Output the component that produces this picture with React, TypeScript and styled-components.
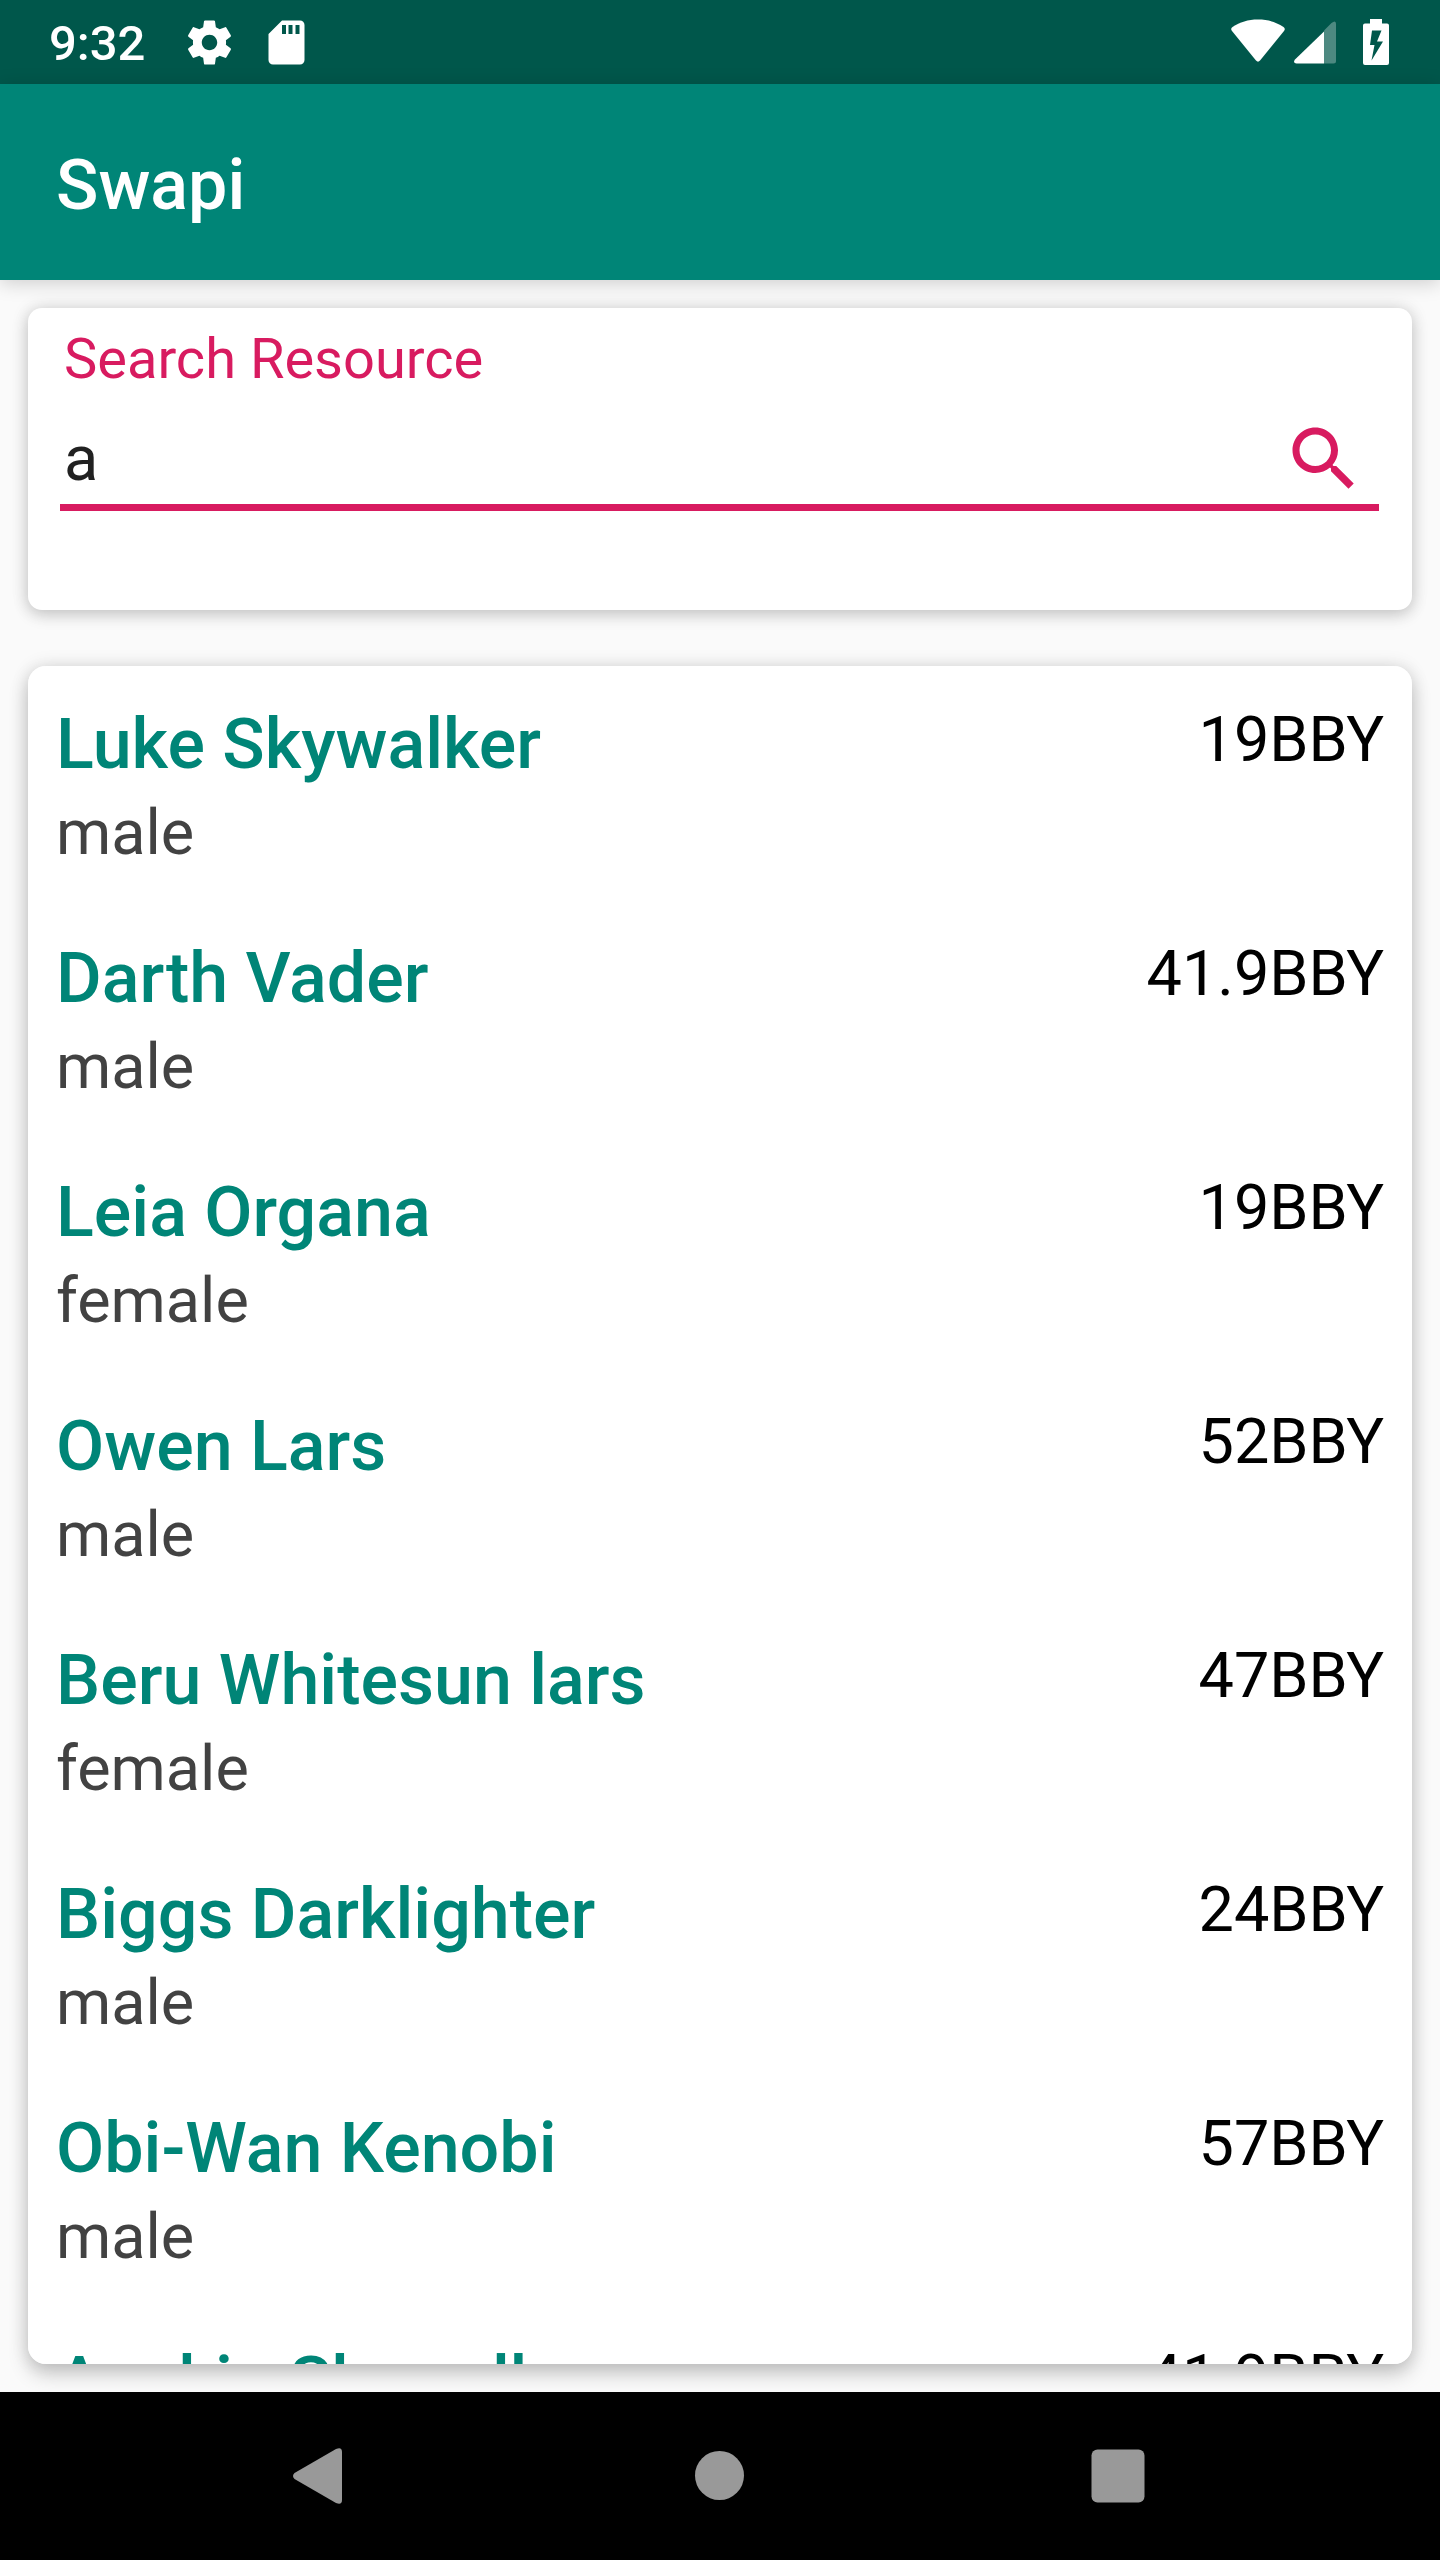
import React, { useState } from "react";
import styled, { createGlobalStyle } from "styled-components";

const color = {
  primary: "#008577",
  primaryDark: "#00574b",
  accent: "#d81b60",
  background: "#fafafa",
  key: "#999999",
};

const GlobalStyle = createGlobalStyle`
  * { box-sizing: border-box; }
  body {
    margin: 0;
    background: ${color.background};
    font-family: Roboto, "Liberation Sans", sans-serif;
  }
`;

const Screen = styled.div`
  display: flex;
  flex-direction: column;
  height: 100vh;
`;

const StatusBar = styled.div`
  display: flex;
  align-items: center;
  justify-content: space-between;
  height: 84px;
  padding: 0 51px 0 49px;
  background: ${color.primaryDark};
  color: #fff;
`;

const StatusGroup = styled.div<{ $gap: number }>`
  display: flex;
  align-items: center;
  gap: ${(p) => p.$gap}px;
`;

const Clock = styled.time`
  width: 110px;
  padding-top: 4px;
  font-size: 49px;
  line-height: 58px;
  font-weight: 500;
`;

const Glyph = styled.svg`
  display: block;
  flex: none;
  fill: currentColor;
`;

const BatteryGlyph = styled(Glyph)`
  margin-left: 18px;
`;

const AppBar = styled.header`
  display: flex;
  align-items: center;
  height: 196px;
  padding: 6px 56px 0;
  background: ${color.primary};
  box-shadow: 0 3px 18px rgba(0, 0, 0, 0.18);
`;

const Title = styled.h1`
  margin: 0;
  color: #fff;
  font-size: 70px;
  line-height: 82px;
  font-weight: 500;
`;

const Content = styled.main`
  display: flex;
  flex: 1;
  flex-direction: column;
  gap: 56px;
  min-height: 0;
  padding: 28px;
`;

const SearchCard = styled.form`
  flex: none;
  padding: 18px 33px 99px 32px;
  border-radius: 14px;
  background: #fff;
  box-shadow: 0 5px 16px rgba(0, 0, 0, 0.16), 0 0 18px rgba(0, 0, 0, 0.12);
`;

const SearchLabel = styled.label`
  display: block;
  padding: 0 4px;
  color: ${color.accent};
  font-size: 56px;
  line-height: 66px;
`;

const SearchField = styled.div`
  display: flex;
  align-items: center;
  height: 99px;
  margin-top: 20px;
  padding: 1px 13px 0 4px;
  border-bottom: 7px solid ${color.accent};
`;

const SearchInput = styled.input`
  flex: 1;
  min-width: 0;
  height: 74px;
  padding: 0;
  border: 0;
  outline: 0;
  background: transparent;
  color: #212121;
  font: 400 63px/74px Roboto, "Liberation Sans", sans-serif;
`;

const IconButton = styled.button`
  display: flex;
  padding: 0;
  border: 0;
  background: transparent;
  color: ${color.accent};
  cursor: pointer;
`;

const PeopleCard = styled.ul`
  flex: 1;
  min-height: 0;
  margin: 0;
  padding: 0;
  overflow-y: auto;
  scrollbar-width: none;
  border-radius: 18px;
  background: #fff;
  list-style: none;
  box-shadow: 0 10px 20px rgba(0, 0, 0, 0.2), 0 0 18px rgba(0, 0, 0, 0.12);
`;

const PersonRow = styled.li`
  display: flex;
  justify-content: space-between;
  padding: 37px 28px 30px;
`;

const PersonText = styled.div`
  display: flex;
  flex-direction: column;
  gap: 11px;
`;

const PersonName = styled.span`
  color: ${color.primary};
  font-size: 70px;
  line-height: 82px;
  font-weight: 500;
`;

const Detail = styled.span<{ $color: string }>`
  color: ${(p) => p.$color};
  font-size: 63px;
  line-height: 74px;
`;

const NavBar = styled.nav`
  display: flex;
  align-items: center;
  height: 168px;
  padding: 0 123px;
  background: #000;
`;

const NavButton = styled(IconButton)`
  flex: 1;
  justify-content: center;
  color: ${color.key};
`;

const people = [
  { name: "Luke Skywalker", gender: "male", birth: "19BBY" },
  { name: "Darth Vader", gender: "male", birth: "41.9BBY" },
  { name: "Leia Organa", gender: "female", birth: "19BBY" },
  { name: "Owen Lars", gender: "male", birth: "52BBY" },
  { name: "Beru Whitesun lars", gender: "female", birth: "47BBY" },
  { name: "Biggs Darklighter", gender: "male", birth: "24BBY" },
  { name: "Obi-Wan Kenobi", gender: "male", birth: "57BBY" },
  { name: "Anakin Skywalker", gender: "male", birth: "41.9BBY" },
];

const SettingsIcon = () => (
  <Glyph width="53" height="53" viewBox="0 0 24 24">
    <path d="M19.43 12.98c.04-.32.07-.64.07-.98s-.03-.66-.07-.98l2.11-1.65c.19-.15.24-.42.12-.64l-2-3.46c-.12-.22-.39-.3-.61-.22l-2.49 1c-.52-.4-1.08-.73-1.69-.98l-.38-2.65C14.46 2.18 14.25 2 14 2h-4c-.25 0-.46.18-.49.42l-.38 2.65c-.61.25-1.17.59-1.69.98l-2.49-1c-.23-.09-.49 0-.61.22l-2 3.46c-.13.22-.07.49.12.64l2.11 1.65c-.04.32-.07.65-.07.98s.03.66.07.98l-2.11 1.65c-.19.15-.24.42-.12.64l2 3.46c.12.22.39.3.61.22l2.49-1c.52.4 1.08.73 1.69.98l.38 2.65c.03.24.24.42.49.42h4c.25 0 .46-.18.49-.42l.38-2.65c.61-.25 1.17-.59 1.69-.98l2.49 1c.23.09.49 0 .61-.22l2-3.46c.12-.22.07-.49-.12-.64l-2.11-1.65zM12 15.5c-1.93 0-3.5-1.57-3.5-3.5s1.57-3.5 3.5-3.5 3.5 1.57 3.5 3.5-1.57 3.5-3.5 3.5z" />
  </Glyph>
);

const SdCardIcon = () => (
  <Glyph width="53" height="53" viewBox="0 0 53 53">
    <path
      fillRule="evenodd"
      d="M22 4.500H40a4.500 4.500 0 0 1 4.500 4.500V44a4.500 4.500 0 0 1-4.500 4.500H13A4.500 4.500 0 0 1 8.500 44V18zM22 9v9h4V9zM28.500 9v9h4V9zM35.500 9v9h4V9z"
    />
  </Glyph>
);

const WifiIcon = () => (
  <Glyph width="54" height="46" viewBox="0 0 54 46">
    <path d="M1 12Q-.8 9.600 1.500 8C9 3 17 .5 27 .5S45 3 52.500 8Q54.800 9.600 53 12L29 41.500q-2 2.300-4 0z" />
  </Glyph>
);

const SignalIcon = () => (
  <Glyph width="42" height="46" viewBox="0 0 42 46">
    <path opacity=".3" d="M30 11.500 37.500 4Q42 .5 42 5V42q0 2.500-2.500 2.500H30z" />
    <path d="M30 12.500V44.500H2.500Q-1.500 44 1 40.500z" />
  </Glyph>
);

const BatteryIcon = () => (
  <BatteryGlyph width="26" height="46" viewBox="0 0 26 46">
    <path
      fillRule="evenodd"
      d="M7 0H19V4.500H24Q26 4.500 26 6.500V44q0 2-2 2H2q-2 0-2-2V6.500Q0 4.500 2 4.500H7zM9 11.500 7 26h4.500L8.500 41.500 20 22.500H14L18.500 11.500z"
    />
  </BatteryGlyph>
);

const SearchIcon = () => (
  <Glyph width="84" height="84" viewBox="0 0 24 24">
    <path d="M15.5 14h-.79l-.28-.27C15.410 12.590 16 11.110 16 9.500 16 5.910 13.090 3 9.500 3S3 5.910 3 9.500 5.910 16 9.500 16c1.610 0 3.090-.59 4.230-1.570l.27.28v.79l5 4.990L20.490 19l-4.990-5zm-6 0C7.010 14 5 11.990 5 9.500S7.010 5 9.500 5 14 7.010 14 9.500 11.990 14 9.500 14z" />
  </Glyph>
);

export default function App() {
  const [query, setQuery] = useState("a");

  return (
    <Screen>
      <GlobalStyle />
      <StatusBar>
        <StatusGroup $gap={24}>
          <Clock>9:32</Clock>
          <SettingsIcon />
          <SdCardIcon />
        </StatusGroup>
        <StatusGroup $gap={9}>
          <WifiIcon />
          <SignalIcon />
          <BatteryIcon />
        </StatusGroup>
      </StatusBar>
      <AppBar>
        <Title>Swapi</Title>
      </AppBar>
      <Content>
        <SearchCard onSubmit={(e) => e.preventDefault()}>
          <SearchLabel htmlFor="resource">Search Resource</SearchLabel>
          <SearchField>
            <SearchInput
              id="resource"
              type="text"
              value={query}
              onChange={(e) => setQuery(e.target.value)}
            />
            <IconButton type="submit" aria-label="Search">
              <SearchIcon />
            </IconButton>
          </SearchField>
        </SearchCard>
        <PeopleCard>
          {people.map((person) => (
            <PersonRow key={person.name}>
              <PersonText>
                <PersonName>{person.name}</PersonName>
                <Detail $color="#424242">{person.gender}</Detail>
              </PersonText>
              <Detail $color="#000">{person.birth}</Detail>
            </PersonRow>
          ))}
        </PeopleCard>
      </Content>
      <NavBar>
        <NavButton type="button" aria-label="Back">
          <Glyph width="84" height="84" viewBox="0 0 84 84">
            <path d="M14.500 39 56 15Q62 12.500 62 18V66q0 5.500-6 3L14.500 45q-3-3 0-6z" />
          </Glyph>
        </NavButton>
        <NavButton type="button" aria-label="Home">
          <Glyph width="84" height="84" viewBox="0 0 84 84">
            <circle cx="41.500" cy="41.500" r="24.500" />
          </Glyph>
        </NavButton>
        <NavButton type="button" aria-label="Overview">
          <Glyph width="84" height="84" viewBox="0 0 84 84">
            <rect x="15.500" y="15.500" width="53" height="53" rx="6" />
          </Glyph>
        </NavButton>
      </NavBar>
    </Screen>
  );
}
